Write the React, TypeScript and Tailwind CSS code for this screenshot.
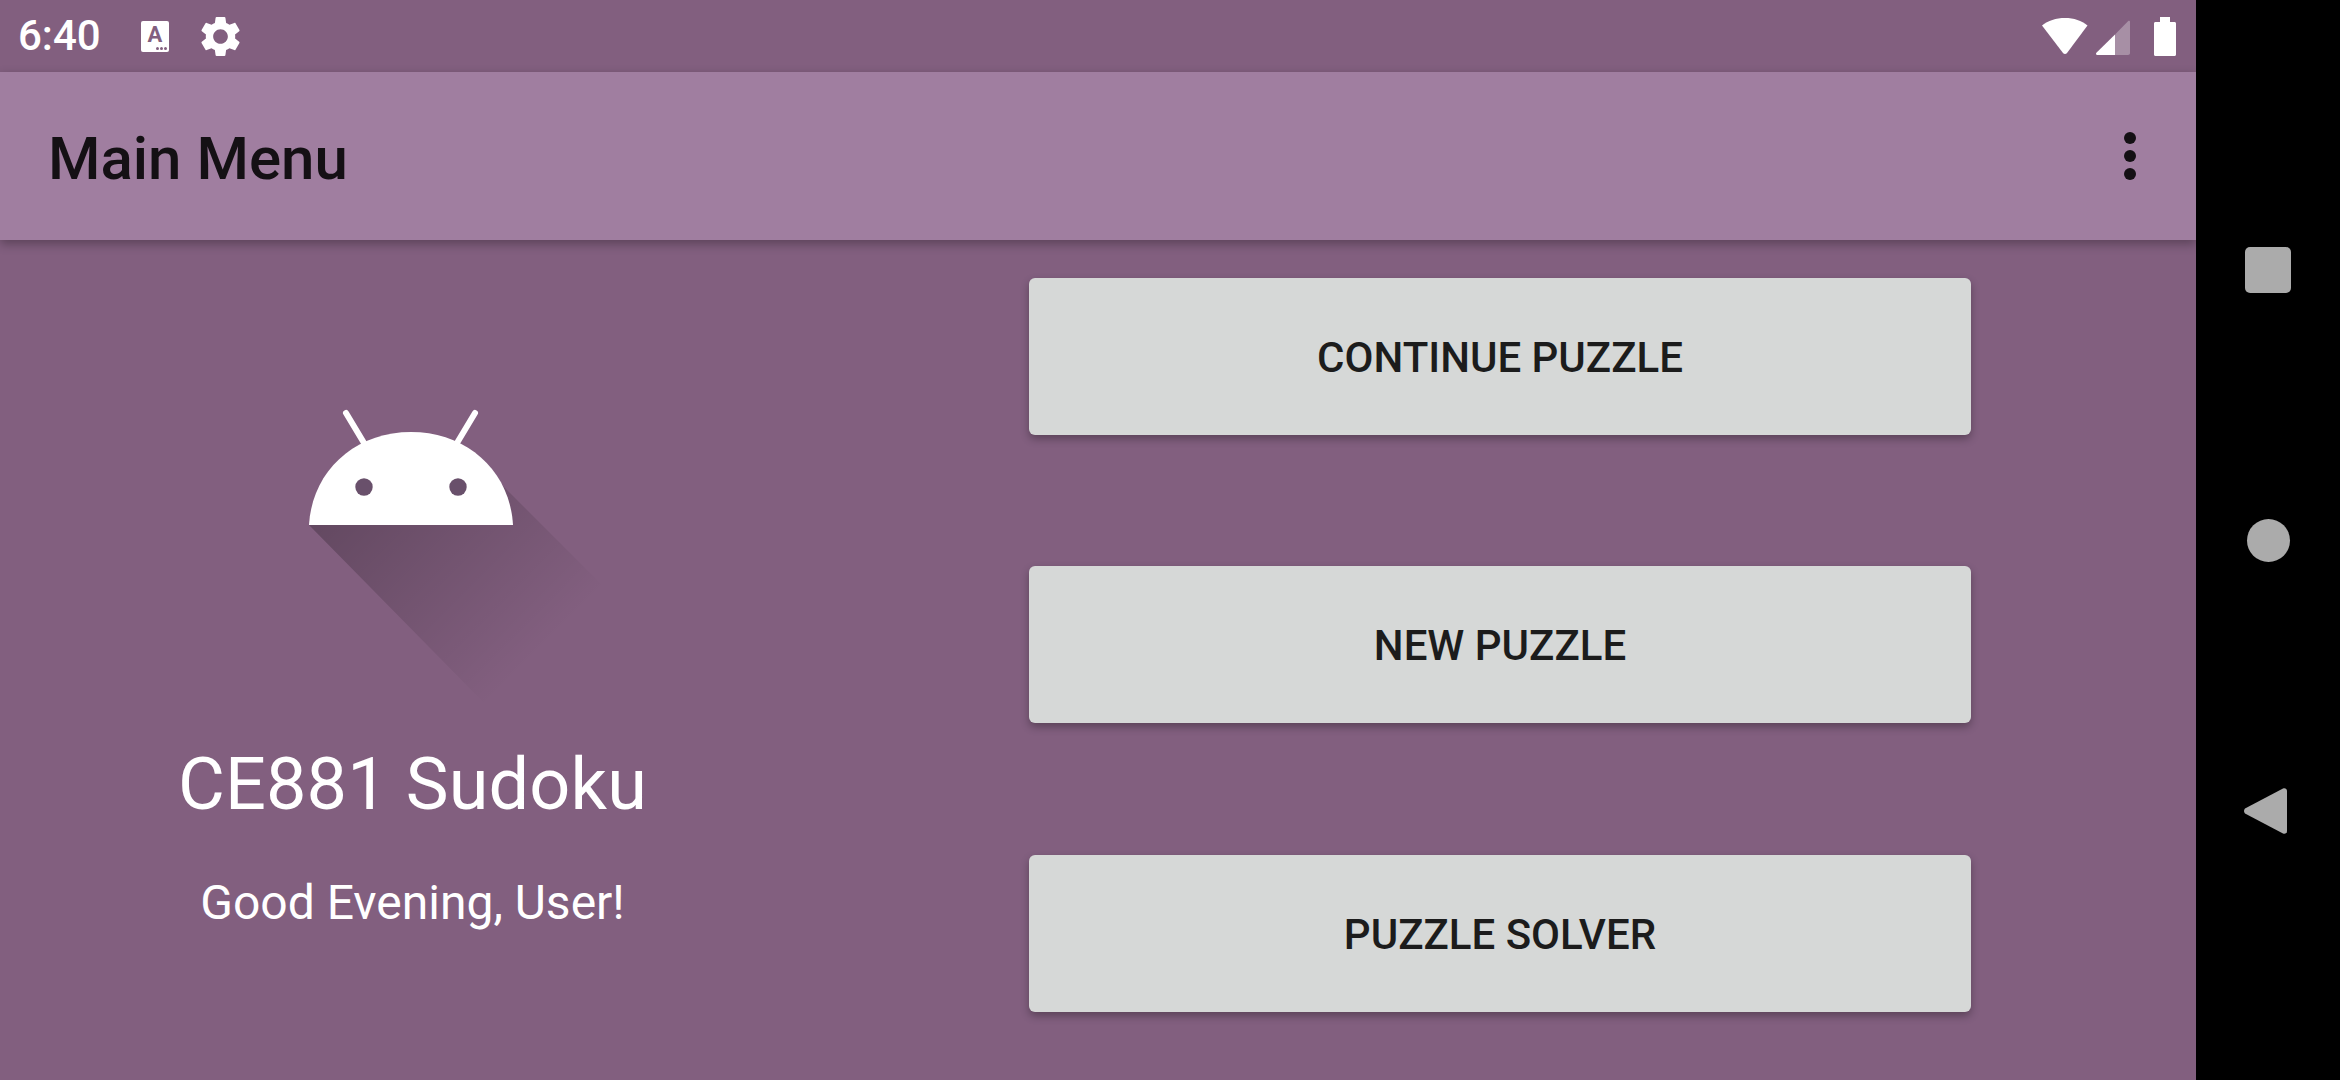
const roboto = "[font-family:Roboto,'Noto_Sans',sans-serif]";

function Gear() {
  return (
    <svg width="49" height="49" viewBox="0 0 24 24" fill="#fff" className="block">
      <path d="M19.14 12.94c.04-.3.06-.61.06-.94 0-.32-.02-.64-.07-.94l2.03-1.58c.18-.14.23-.41.12-.61l-1.92-3.32c-.12-.22-.37-.29-.59-.22l-2.39.96c-.5-.38-1.03-.7-1.62-.94l-.36-2.54c-.04-.24-.24-.41-.48-.41h-3.84c-.24 0-.43.17-.47.41l-.36 2.54c-.59.24-1.13.57-1.62.94l-2.39-.96c-.22-.08-.47 0-.59.22L2.74 8.87c-.12.21-.08.47.12.61l2.03 1.58c-.05.3-.09.63-.09.94s.02.64.07.94l-2.03 1.58c-.18.14-.23.41-.12.61l1.92 3.32c.12.22.37.29.59.22l2.39-.96c.5.38 1.03.7 1.62.94l.36 2.54c.05.24.24.41.48.41h3.84c.24 0 .44-.17.47-.41l.36-2.54c.59-.24 1.13-.56 1.62-.94l2.39.96c.22.08.47 0 .59-.22l1.92-3.32c.12-.22.07-.47-.12-.61l-2.01-1.58zM12 15.6c-1.98 0-3.6-1.62-3.6-3.6s1.62-3.6 3.6-3.6 3.6 1.62 3.6 3.6-1.62 3.6-3.6 3.6z" />
    </svg>
  );
}

function KeyboardA() {
  return (
    <div className="relative flex h-[31px] w-[28px] justify-center rounded-[2px] bg-white">
      <span className={`${roboto} mt-[4px] text-[22px] leading-[20px] font-bold text-[#825f7f]`}>A</span>
      <div className="absolute right-[2px] bottom-[2px] flex gap-[1px]">
        <div className="h-[3px] w-[3px] rounded-full bg-[#825f7f]" />
        <div className="h-[3px] w-[3px] rounded-full bg-[#825f7f]" />
        <div className="h-[3px] w-[3px] rounded-full bg-[#825f7f]" />
      </div>
    </div>
  );
}

function StatusRight() {
  return (
    <svg width="134" height="39" viewBox="2042 16 134 39" className="block">
      <path d="M2065 17c-9 0-17 2.500-23 7.500l21 27.500c1 1.300 3 1.300 4 0l20.500-27.500c-6-5-13.500-7.500-22.500-7.500z" fill="#fff" />
      <path d="M2115 33.500v20.500h13c1.200 0 2-.8 2-2v-31c0-1.500-1.200-1.500-2-.8z" fill="#fff" fillOpacity="0.3" />
      <path d="M2115 33.500l-18.600 18.300c-.8.800-.3 2.200.8 2.200h17.800z" fill="#fff" />
      <path d="M2160 16h10v5h4.500c.9 0 1.500.7 1.500 1.500v31c0 .8-.6 1.500-1.500 1.500h-19c-.9 0-1.500-.7-1.500-1.500v-31c0-.8.6-1.500 1.500-1.500h4.500z" fill="#fff" />
    </svg>
  );
}

function AndroidLogo() {
  return (
    <svg width="340" height="320" viewBox="270 390 340 320" className="ml-[54px] block">
      <defs>
        <linearGradient id="logoShadow" gradientUnits="userSpaceOnUse" x1="416" y1="417" x2="595" y2="595">
          <stop offset="0" stopColor="#000" stopOpacity="0.24" />
          <stop offset="1" stopColor="#000" stopOpacity="0" />
        </linearGradient>
      </defs>
      <path d="M309 524H513L503 485L608 590L490 708z" fill="url(#logoShadow)" />
      <path d="M346 412L364 442M475 412L457 442" stroke="#fff" strokeWidth="6" strokeLinecap="round" />
      <path d="M309 524C312 470 355 431 411 431C467 431 510 470 513 524z" fill="#fff" />
      <circle cx="364" cy="486" r="8.700" fill="#69506b" />
      <circle cx="458" cy="486" r="8.700" fill="#69506b" />
    </svg>
  );
}

function MenuButton({ label }: { label: string }) {
  return (
    <button className={`${roboto} flex h-[157px] w-[942px] items-center justify-center rounded-[6px] bg-[#d6d8d7] pt-[2px] text-[42px] leading-none font-medium text-[#1c1c1c] shadow-[0_4px_8px_rgba(0,0,0,0.3)]`}>
      {label}
    </button>
  );
}

export default function App() {
  return (
    <div className={`${roboto} flex h-[1080px] w-[2340px] overflow-hidden bg-black`}>
      <div className="flex w-[2196px] flex-col bg-[#825f7f]">
        <div className="flex h-[72px] items-center justify-between pr-[20px] pl-[18px]">
          <div className="flex items-center">
            <span className="w-[123px] text-[42px] leading-none font-medium text-white">6:40</span>
            <KeyboardA />
            <div className="ml-[27px]">
              <Gear />
            </div>
          </div>
          <StatusRight />
        </div>

        <div className="relative z-10 flex h-[168px] items-center justify-between bg-[#a07ea0] pr-[60px] pl-[48px] shadow-[0_4px_10px_rgba(0,0,0,0.3)]">
          <span className="pt-[5px] text-[60px] leading-none font-medium text-[#141014]">Main Menu</span>
          <div className="flex flex-col gap-[6px]">
            <div className="h-[12px] w-[12px] rounded-full bg-[#141014]" />
            <div className="h-[12px] w-[12px] rounded-full bg-[#141014]" />
            <div className="h-[12px] w-[12px] rounded-full bg-[#141014]" />
          </div>
        </div>

        <div className="flex flex-1">
          <div className="flex w-[825px] flex-col items-center pt-[151px]">
            <AndroidLogo />
            <span className="mt-[38px] text-[72px] leading-none tracking-[0.15px] text-white">CE881 Sudoku</span>
            <span className="mt-[58px] text-[48px] leading-none text-white">Good Evening, User!</span>
          </div>
          <div className="ml-[204px] flex flex-col pt-[38px]">
            <MenuButton label="CONTINUE PUZZLE" />
            <div className="mt-[131px]">
              <MenuButton label="NEW PUZZLE" />
            </div>
            <div className="mt-[132px]">
              <MenuButton label="PUZZLE SOLVER" />
            </div>
          </div>
        </div>
      </div>

      <div className="flex w-[144px] flex-col items-center pt-[247px]">
        <div className="h-[46px] w-[46px] rounded-[5px] bg-[#ababab]" />
        <div className="mt-[226px] h-[43px] w-[43px] rounded-full bg-[#ababab]" />
        <svg width="44" height="48" viewBox="0 0 44 48" className="mt-[225px] -ml-[4px] block">
          <path d="M1 21.500L39 1.500C41 .6 43 1.800 43 4V44C43 46.200 41 47.400 39 46.500L1 26.500C-.3 25 -.3 23 1 21.500z" fill="#ababab" />
        </svg>
      </div>
    </div>
  );
}
